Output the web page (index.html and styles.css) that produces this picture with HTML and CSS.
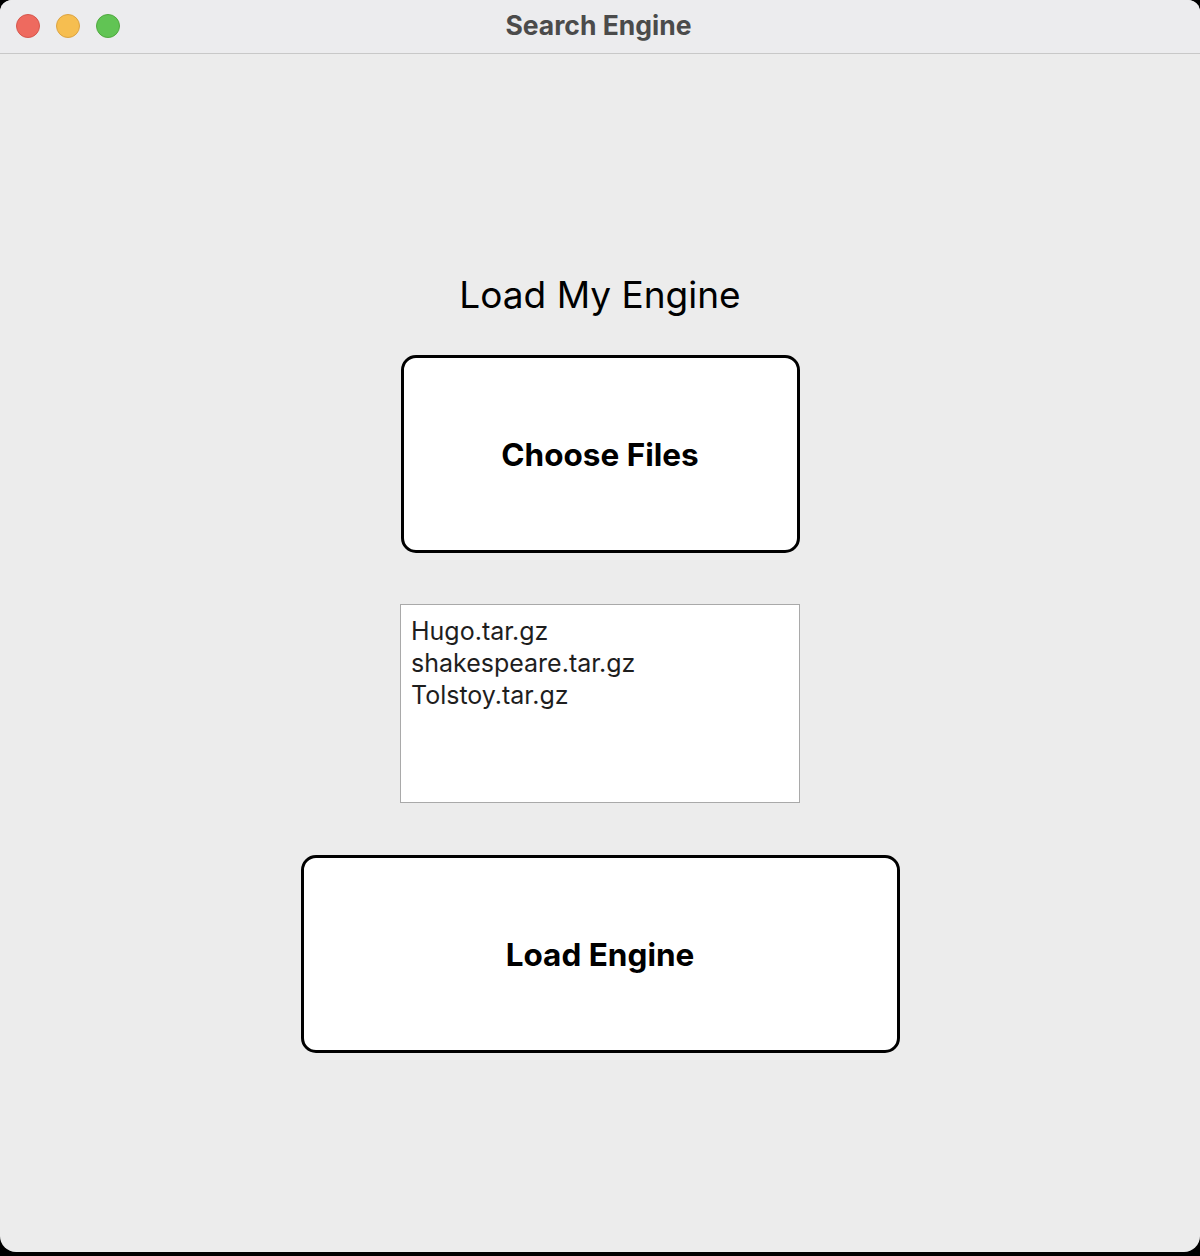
FILE: index.html
```html
<!DOCTYPE html>
<html>
<head>
<meta charset="utf-8">
<title>Search Engine</title>
<link rel="stylesheet" href="styles.css">
</head>
<body>
<div class="window">
  <div class="titlebar">
    <div class="lights">
      <span class="light red"></span>
      <span class="light yellow"></span>
      <span class="light green"></span>
    </div>
    <div class="wtitle">Search Engine</div>
  </div>
  <div class="content">
    <h1 class="heading">Load My Engine</h1>
    <button class="btn btn-choose">Choose Files</button>
    <div class="filelist">
      <div class="file">Hugo.tar.gz</div>
      <div class="file">shakespeare.tar.gz</div>
      <div class="file">Tolstoy.tar.gz</div>
    </div>
    <button class="btn btn-load">Load Engine</button>
  </div>
</div>
</body>
</html>
```
FILE: styles.css
```css
html, body {
  margin: 0;
  padding: 0;
  background: #000;
}
body {
  width: 1200px;
  height: 1256px;
  overflow: hidden;
  font-family: Inter, "Liberation Sans", sans-serif;
}
.window {
  width: 1200px;
  height: 1252px;
  background: #ececec;
  border-radius: 12px 12px 16px 16px;
  overflow: hidden;
  display: flex;
  flex-direction: column;
}
.titlebar {
  position: relative;
  height: 53px;
  background: #ececee;
  border-bottom: 1px solid #c8c8c8;
  display: flex;
  align-items: center;
  justify-content: center;
}
.lights {
  position: absolute;
  left: 16px;
  top: 14px;
  display: flex;
  gap: 16px;
}
.light {
  width: 24px;
  height: 24px;
  border-radius: 50%;
  box-sizing: border-box;
}
.red { background: #ee6a5f; border: 1px solid #d6574d; }
.yellow { background: #f6be50; border: 1px solid #dca443; }
.green { background: #61c454; border: 1px solid #50a93f; }
.wtitle {
  font-size: 26.5px;
  font-weight: 700;
  color: #4b4b4b;
  margin-left: -3px;
  margin-top: -4px;
}
.content {
  flex: 1;
  display: flex;
  flex-direction: column;
  align-items: center;
  padding-top: 218px;
}
.heading {
  margin: 0;
  font-size: 37px;
  line-height: 46px;
  font-weight: 400;
  color: #000;
}
.btn {
  box-sizing: border-box;
  background: #fff;
  border: 3px solid #000;
  border-radius: 15px;
  font-family: Inter, "Liberation Sans", sans-serif;
  font-weight: 700;
  font-size: 31.5px;
  color: #000;
  padding: 0;
}
.btn-choose {
  width: 399px;
  height: 198px;
  margin-top: 37px;
}
.btn-load {
  width: 599px;
  height: 198px;
  margin-top: 52px;
}
.filelist {
  box-sizing: border-box;
  width: 400px;
  height: 199px;
  margin-top: 51px;
  background: #fff;
  border: 1px solid #a9a9a9;
  padding: 10px 10px;
  font-size: 25px;
  line-height: 32px;
  color: #1e1e1e;
}
```
